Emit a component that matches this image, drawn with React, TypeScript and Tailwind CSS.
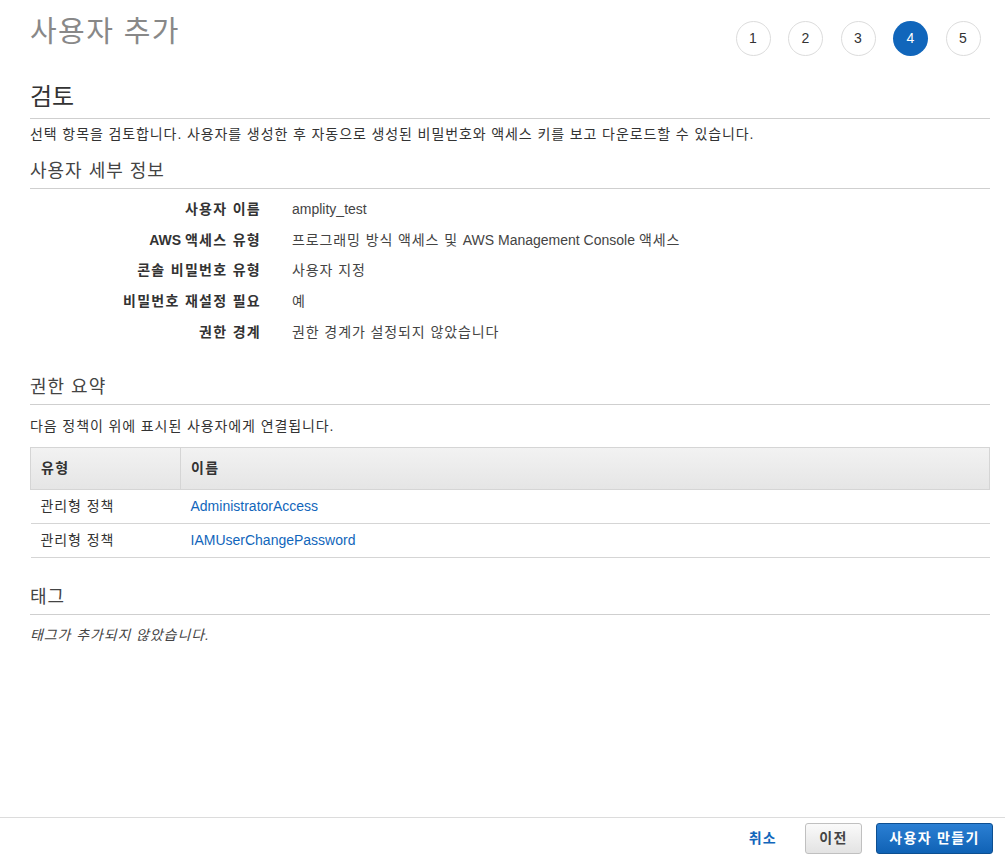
import React from 'react';

const FONT = '"Liberation Sans", "Noto Sans CJK KR", sans-serif';

const details: [string, string][] = [
  ['사용자 이름', 'amplity_test'],
  ['AWS 액세스 유형', '프로그래밍 방식 액세스 및 AWS Management Console 액세스'],
  ['콘솔 비밀번호 유형', '사용자 지정'],
  ['비밀번호 재설정 필요', '예'],
  ['권한 경계', '권한 경계가 설정되지 않았습니다'],
];

const policies = ['AdministratorAccess', 'IAMUserChangePassword'];

// Hangul in the screenshot's font runs a little wider than Noto CJK, so widen only the Korean runs
const K: React.FC<{ t: string; wide?: boolean }> = ({ t, wide }) => (
  <>
    {t.split(/([\uac00-\ud7a3][\uac00-\ud7a3 .]*)/).map((part, i) =>
      /[\uac00-\ud7a3]/.test(part) ? (
        <span key={i} className={wide ? 'tracking-[1.3px]' : 'tracking-[0.9px]'}>{part}</span>
      ) : (
        <span key={i}>{part}</span>
      )
    )}
  </>
);

const SectionTitle: React.FC<{ children: React.ReactNode }> = ({ children }) => (
  <h3 className="text-[18px] leading-[24px] text-[#444] font-normal tracking-[1px] pb-[5px] border-b border-[#cfcfcf]">
    {children}
  </h3>
);

export default function App() {
  return (
    <div className="w-[1005px] h-[859px] bg-white flex flex-col text-[#333] text-[14px]" style={{ fontFamily: FONT }}>
      <div className="flex-1 pl-[30px] pr-[15px]">
        {/* header */}
        <div className="flex items-start justify-between pt-[14px]">
          <h1 className="text-[29px] leading-[36px] text-[#888] font-normal tracking-[1.4px]">사용자 추가</h1>
          <div className="flex gap-[17.5px] pt-[7px] pr-[9.5px]">
            {[1, 2, 3, 4, 5].map(n => (
              <div
                key={n}
                className={
                  n === 4
                    ? 'w-[35px] h-[35px] rounded-full bg-[#1166bb] text-white flex items-center justify-center text-[14px]'
                    : 'w-[35px] h-[35px] rounded-full border border-[#dcdcdc] text-[#333] flex items-center justify-center text-[14px]'
                }
              >
                {n}
              </div>
            ))}
          </div>
        </div>

        {/* 검토 */}
        <h2 className="mt-[26px] text-[24px] leading-[30px] text-[#333] font-normal pb-[6px] border-b border-[#cfcfcf]">검토</h2>
        <p className="mt-[5px] leading-[20px]">
          <K t="선택 항목을 검토합니다. 사용자를 생성한 후 자동으로 생성된 비밀번호와 액세스 키를 보고 다운로드할 수 있습니다." />
        </p>

        {/* 사용자 세부 정보 */}
        <div className="mt-[15px]">
          <SectionTitle>사용자 세부 정보</SectionTitle>
          <div className="pt-[5px] flex flex-col">
            {details.map(([k, v]) => (
              <div key={k} className="flex h-[30.7px] items-center">
                <div className="w-[231px] text-right font-bold text-[#333]"><K t={k} wide /></div>
                <div className="pl-[31px] text-[#444]"><K t={v} /></div>
              </div>
            ))}
          </div>
        </div>

        {/* 권한 요약 */}
        <div className="mt-[28px]">
          <SectionTitle>권한 요약</SectionTitle>
          <p className="mt-[11px] leading-[20px]"><K t="다음 정책이 위에 표시된 사용자에게 연결됩니다." /></p>
          <table className="mt-[11px] w-full border-collapse">
            <thead>
              <tr className="bg-gradient-to-b from-[#f2f2f2] to-[#e5e5e5] h-[42px]">
                <th className="w-[150px] text-left font-bold pl-[10px] border border-[#d5d5d5]"><K t="유형" wide /></th>
                <th className="text-left font-bold pl-[10px] border border-[#d5d5d5]"><K t="이름" wide /></th>
              </tr>
            </thead>
            <tbody>
              {policies.map(p => (
                <tr key={p} className="h-[34px] border-b border-[#d5d5d5]">
                  <td className="pl-[10px]"><K t="관리형 정책" /></td>
                  <td className="pl-[10px] text-[#1166bb]">{p}</td>
                </tr>
              ))}
            </tbody>
          </table>
        </div>

        {/* 태그 */}
        <div className="mt-[27px]">
          <SectionTitle>태그</SectionTitle>
          <p className="mt-[10px] italic text-[#444] leading-[20px]"><K t="태그가 추가되지 않았습니다." /></p>
        </div>
      </div>

      {/* footer */}
      <div className="border-t border-[#dcdcdc] h-[42px] flex items-center justify-end gap-[14px] pr-[12px]">
        <button className="px-[14px] font-bold text-[#1166bb] text-[14px]"><K t="취소" wide /></button>
        <button className="h-[31px] w-[57px] rounded-[3px] border border-[#c0c0c0] bg-gradient-to-b from-[#fafafa] to-[#e3e3e3] font-bold text-[#444] text-[14px]">
          <K t="이전" wide />
        </button>
        <button className="h-[31px] w-[117px] rounded-[3px] border border-[#0d4f91] bg-gradient-to-b from-[#2a7fd3] to-[#0f62b5] font-bold text-white text-[14px]">
          <K t="사용자 만들기" wide />
        </button>
      </div>
    </div>
  );
}
